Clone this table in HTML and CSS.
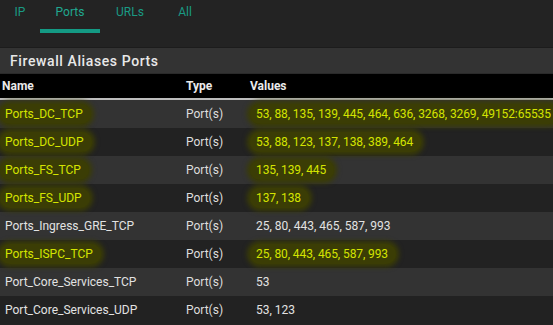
FILE: index.html
```html
<!DOCTYPE html>
<html>
<head>
<meta charset="utf-8">
<link rel="stylesheet" href="styles.css">
</head>
<body>
<div class="tabs">
  <div class="tab">IP</div>
  <div class="tab active">Ports</div>
  <div class="tab">URLs</div>
  <div class="tab">All</div>
</div>
<div class="section-title">Firewall Aliases Ports</div>
<table class="grid">
  <thead>
    <tr><th class="c-name">Name</th><th class="c-type">Type</th><th class="c-val">Values</th></tr>
  </thead>
  <tbody>
    <tr><td class="c-name"><span class="hl">Ports_DC_TCP</span></td><td class="c-type">Port(s)</td><td class="c-val"><span class="hl">53, 88, 135, 139, 445, 464, 636, 3268, 3269, 49152:65535</span></td></tr>
    <tr><td class="c-name"><span class="hl">Ports_DC_UDP</span></td><td class="c-type">Port(s)</td><td class="c-val"><span class="hl">53, 88, 123, 137, 138, 389, 464</span></td></tr>
    <tr><td class="c-name"><span class="hl">Ports_FS_TCP</span></td><td class="c-type">Port(s)</td><td class="c-val"><span class="hl">135, 139, 445</span></td></tr>
    <tr><td class="c-name"><span class="hl">Ports_FS_UDP</span></td><td class="c-type">Port(s)</td><td class="c-val"><span class="hl">137, 138</span></td></tr>
    <tr><td class="c-name"><span class="plain">Ports_Ingress_GRE_TCP</span></td><td class="c-type">Port(s)</td><td class="c-val"><span class="plain">25, 80, 443, 465, 587, 993</span></td></tr>
    <tr><td class="c-name"><span class="hl">Ports_ISPC_TCP</span></td><td class="c-type">Port(s)</td><td class="c-val"><span class="hl">25, 80, 443, 465, 587, 993</span></td></tr>
    <tr><td class="c-name"><span class="plain">Port_Core_Services_TCP</span></td><td class="c-type">Port(s)</td><td class="c-val"><span class="plain">53</span></td></tr>
    <tr><td class="c-name"><span class="plain">Port_Core_Services_UDP</span></td><td class="c-type">Port(s)</td><td class="c-val"><span class="plain">53, 123</span></td></tr>
  </tbody>
</table>
</body>
</html>
```
FILE: styles.css
```css
html, body {
  margin: 0;
  padding: 0;
  background: #232323;
  font-family: Roboto, "Noto Sans", sans-serif;
  overflow: hidden;
}
.tabs {
  display: flex;
  height: 48px;
  background: #232323;
  border-bottom: 1px solid #1c1c1c;
  box-sizing: border-box;
}
.tab {
  color: #1a9a83;
  font-size: 12px;
  padding: 5px 0 0 0;
  height: 33px;
  box-sizing: border-box;
  text-align: center;
}
.tab:nth-child(1) { width: 40px; }
.tab:nth-child(2) { width: 60px; border-bottom: 4px solid #149a84; color: #20a890; }
.tab:nth-child(3) { width: 60px; }
.tab:nth-child(4) { width: 50px; }
.section-title {
  background: #333333;
  color: #e8e8e8;
  font-size: 14px;
  font-weight: 500;
  letter-spacing: 0.6px;
  height: 25px;
  line-height: 26px;
  padding-left: 10px;
  border-bottom: 1px solid #2a2a2a;
}
.grid {
  width: 100%;
  border-collapse: collapse;
  font-size: 12px;
  table-layout: fixed;
}
.grid th {
  background: #000;
  color: #eaeaea;
  font-weight: 700;
  text-align: left;
  height: 24px;
  padding: 0;
  border-bottom: 2px solid #bdbdbd;
}
.grid td {
  height: 28px;
  padding: 0;
  color: #e2e2e2;
  white-space: nowrap;
  overflow: visible;
}
.grid tbody tr:nth-child(odd) td { background: #333333; }
.grid tbody tr:nth-child(even) td { background: #222222; }
.grid th.c-name { padding-left: 2px; width: 184px; }
.grid th.c-type { width: 64px; }
.grid td.c-type { color: #dedede; }
.grid td.c-name { padding-left: 0; }
.hl, .plain {
  display: inline-block;
  padding: 3px 8px 3px 5px;
  border-radius: 12px;
}
.grid td.c-val .hl, .grid td.c-val .plain { padding-left: 6px; }
.grid td.c-val .hl:first-child { letter-spacing: -0.1px; }
.hl {
  color: #d4e400;
  background: #3b3d05;
  box-shadow: 0 0 5px 3px #3b3d05;
}
```
